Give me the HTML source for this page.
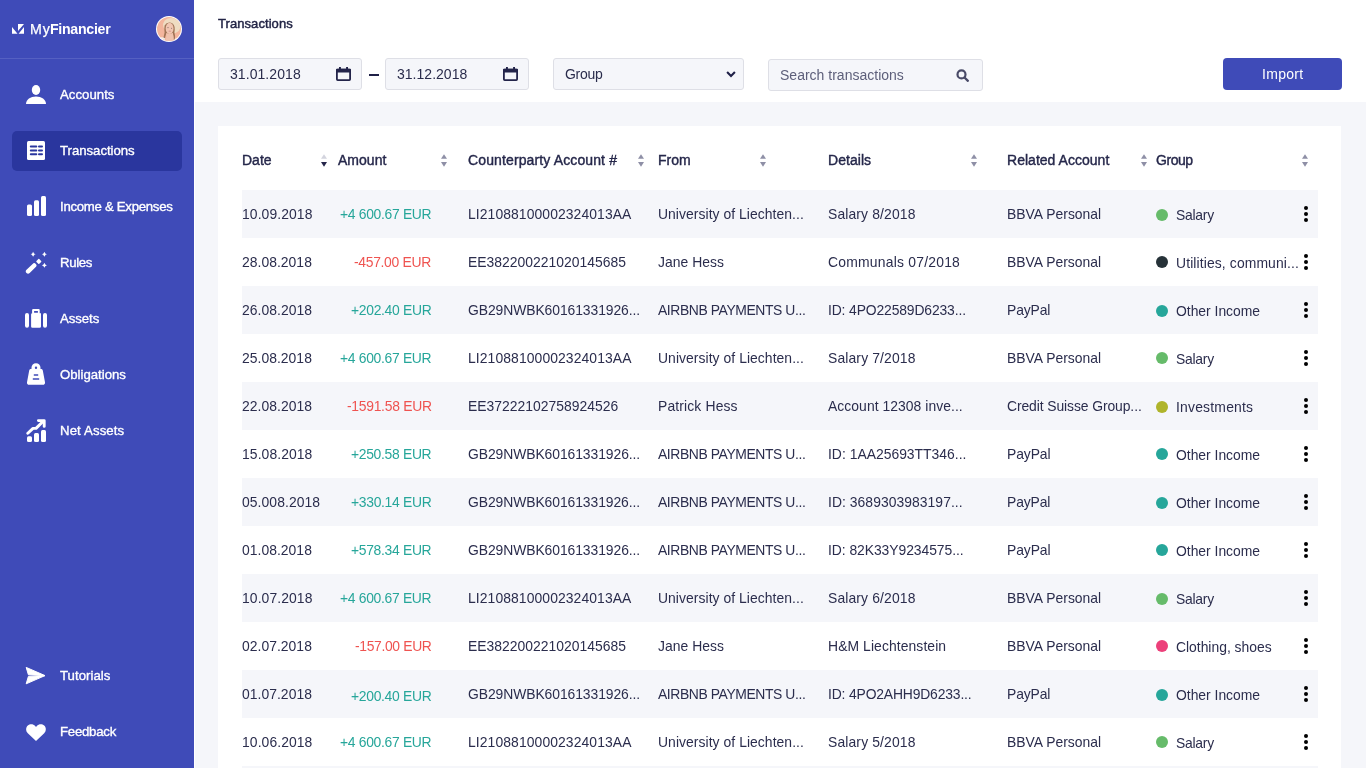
<!DOCTYPE html>
<html><head><meta charset="utf-8"><title>Transactions</title>
<style>
*{box-sizing:border-box}
html,body{margin:0;padding:0}
body{width:1366px;height:768px;overflow:hidden;position:relative;background:#fff;font-family:"Liberation Sans",sans-serif;color:#272a4a}
.t,.th,.td,.nav,.title,.iv,.btnt,.brandt{position:absolute;white-space:nowrap;line-height:20px;will-change:transform}
.sb{position:absolute;left:0;top:0;width:194px;height:768px;background:#3f4bb8}
.sbline{position:absolute;left:0;top:58px;width:194px;height:1px;background:#5560c2}
.nav{color:#fff;-webkit-text-stroke:0.35px #fff}
.active{position:absolute;left:12px;top:131px;width:170px;height:40px;border-radius:5px;background:#2a369e}
.ico{position:absolute}
.brandt{color:#fff}.my{-webkit-text-stroke:0.25px #fff}.fin{font-weight:700}
.title{color:#232546;-webkit-text-stroke:0.45px #232546}
.iv{color:#2a2c4c}.ph{color:#5d5f7a}.btnt{color:#fff}
.inp{position:absolute;top:58px;height:32px;background:#f5f6fa;border:1px solid #dedfe6;border-radius:3px}
.btn{position:absolute;left:1223px;top:58px;width:119px;height:32px;border-radius:4px;background:#3f4bb8;color:#fff;font-size:14.4px;line-height:20px;text-align:center;padding-top:6px}
.bggray{position:absolute;left:195px;top:102px;width:1171px;height:666px;background:#f5f6fa}
.card{position:absolute;left:218px;top:126px;width:1123px;height:642px;background:#fff}
.th{color:#25274a;-webkit-text-stroke:0.4px #25274a}
.sort{position:absolute;top:154px}
.rowbg{position:absolute;left:242px;width:1076px;height:48px;background:#f5f6fa}
.td{color:#2b2d4d}
.amt{text-align:right}
.pos{color:#26a69a}
.neg{color:#ef5350}
.dot{position:absolute;left:1156px;width:12px;height:12px;border-radius:50%}
.kebab{position:absolute;left:1304px;width:4px;height:16px}
.kebab i{display:block;width:4px;height:4px;border-radius:50%;background:#000;margin-bottom:2px}
</style></head><body>

<div class="sb"></div>
<div class="sbline"></div>
<div class="active"></div>
<svg class="ico" style="left:12px;top:24px" width="12" height="10" viewBox="0 0 12 10"><path d="M0 3.1V9.8H5.5Z M6 0H12L6 7Z M12 3.1V9.8H6.6Z" fill="#fff"/></svg>
<svg class="ico" style="left:156px;top:16px" width="26" height="26" viewBox="0 0 26 26">
<defs><clipPath id="av"><circle cx="13" cy="13" r="12"/></clipPath></defs>
<circle cx="13" cy="13" r="13" fill="#fff"/>
<g clip-path="url(#av)">
<rect width="26" height="26" fill="#f3b59d"/>
<ellipse cx="15.8" cy="9.6" rx="8.8" ry="7.6" transform="rotate(15 15.8 9.6)" fill="#efdcc2"/>
<path d="M8.6 9.6Q10.4 6.4 13.8 6.6Q17.6 7 18.6 11Q19 14.6 18.4 16.6Q19.6 19.6 18.8 24.2L17.4 24.2Q17.6 20.2 16.8 17.4L10.2 17.4Q9.2 20.4 8.8 24L7.2 23.6Q7.8 19.6 8.6 16.6Q8 13 8.6 9.6Z" fill="#a17456"/>
<ellipse cx="13.6" cy="12.4" rx="3.9" ry="5.6" fill="#f1c6b2"/>
<path d="M10.4 16.8Q13.6 19.4 16.8 16.8L17.4 20L18 26H9.6L10.4 20Z" fill="#efc2ae"/>
<path d="M3.6 21.6Q6.4 20.6 9 22.2L8.6 26H3Z" fill="#f2ebe6"/>
<path d="M18.4 23Q20.8 21.6 23.4 22.6L23 26H18.2Z" fill="#f2ebe6"/>
<circle cx="12" cy="11.6" r="0.55" fill="#8a6a66"/><circle cx="15.6" cy="12.2" r="0.55" fill="#8a6a66"/>
<ellipse cx="13.8" cy="15.2" rx="1.3" ry="0.6" fill="#dc9a95"/>
</g></svg>
<!-- accounts -->
<svg class="ico" style="left:26px;top:85px" width="20" height="19" viewBox="0 0 20 19"><ellipse cx="10" cy="5" rx="4.2" ry="5" fill="#fff"/><path d="M0 19C0 14.5 4.5 11.4 10 11.4C15.5 11.4 20 14.5 20 19Z" fill="#fff"/></svg>
<!-- transactions -->
<svg class="ico" style="left:27px;top:141px" width="18" height="19" viewBox="0 0 18 19"><rect width="18" height="19" rx="1.5" fill="#fff"/><g stroke="#2a369e" stroke-width="2" stroke-linecap="round"><path d="M3.8 5.5H9.3M12 5.5H15M3.8 9.5H9.3M12 9.5H15M3.8 13.3H9.3M12 13.3H15"/></g></svg>
<!-- income -->
<svg class="ico" style="left:27px;top:196px" width="19" height="20" viewBox="0 0 19 20"><rect x="0" y="8.5" width="5" height="11.5" rx="1.5" fill="#fff"/><rect x="7" y="4.2" width="5" height="15.8" rx="1.5" fill="#fff"/><rect x="14" y="0" width="5" height="20" rx="1.5" fill="#fff"/></svg>
<!-- rules -->
<svg class="ico" style="left:24px;top:250px" width="24" height="24" viewBox="0 0 24 24"><path d="M4.1 21.4L10.2 15.5" stroke="#fff" stroke-width="4.5" stroke-linecap="round"/><rect x="12.8" y="9.4" width="4" height="4" rx="0.7" transform="rotate(45 14.8 11.4)" fill="#fff"/><path id="sp" d="M9.1 1.8Q9.6 3.8 11.6 4.3Q9.6 4.8 9.1 6.8Q8.6 4.8 6.6 4.3Q8.6 3.8 9.1 1.8Z" fill="#fff"/><use href="#sp" x="11.3"/><use href="#sp" x="11.3" y="11"/></svg>
<!-- assets -->
<svg class="ico" style="left:24px;top:308px" width="24" height="20" viewBox="0 0 24 20"><rect x="1" y="5" width="4" height="14.8" rx="2" fill="#fff"/><rect x="19" y="5" width="4" height="14.8" rx="2" fill="#fff"/><path d="M9.3 1.1Q9.3 1 10 1H14.7Q15.7 1 15.7 2V5.2H17Q17 5.2 17 6.5V18.5Q17 19.8 15.7 19.8H8.4Q7.1 19.8 7.1 18.5V6.5Q7.1 5.2 8.4 5.2H8.1V2Q8.1 1 9.3 1ZM10.1 3V4.8H13.9V3Z" fill="#fff" fill-rule="evenodd"/></svg>
<!-- obligations -->
<svg class="ico" style="left:26px;top:362px" width="20" height="24" viewBox="0 0 20 24"><path d="M10 1.2C12.6 1.2 14.5 3.2 14.5 5.6C14.5 6 14.4 6.5 14.3 6.8H14.6C15.8 6.8 16.5 7.6 16.8 8.6L19 20.2C19.3 21.7 18.4 22.8 16.8 22.8H3.2C1.6 22.8 0.7 21.7 1 20.2L3.2 8.6C3.5 7.6 4.2 6.8 5.4 6.8H5.7C5.6 6.5 5.5 6 5.5 5.6C5.5 3.2 7.4 1.2 10 1.2ZM10 4.6A1.2 1.2 0 1 0 10 7A1.2 1.2 0 1 0 10 4.6Z" fill="#fff" fill-rule="evenodd"/><path d="M7.8 13H12.2M6.8 17H13.2" stroke="#3f4bb8" stroke-width="1.7"/></svg>
<!-- net assets -->
<svg class="ico" style="left:26px;top:418px" width="21" height="25" viewBox="0 0 21 25"><rect x="1" y="18.3" width="5" height="5.7" rx="1.5" fill="#fff"/><rect x="8" y="15" width="5" height="9" rx="1.5" fill="#fff"/><rect x="15" y="12" width="5" height="12" rx="1.5" fill="#fff"/><path d="M1.8 15.2L7 10.4H10L17.2 3.2" stroke="#fff" stroke-width="2.9" stroke-linecap="round" stroke-linejoin="round" fill="none"/><path d="M12.4 2.6H18.2V8.4" stroke="#fff" stroke-width="2.9" stroke-linecap="round" stroke-linejoin="round" fill="none"/></svg>
<!-- tutorials -->
<svg class="ico" style="left:25px;top:666px" width="21" height="19" viewBox="0 0 21 19"><path d="M1.2 1.4L20 9.6L3.4 8.8ZM3.4 10.4L20 9.6L1.2 17.8Z" fill="#fff" stroke="#fff" stroke-width="1" stroke-linejoin="round"/></svg>
<!-- feedback -->
<svg class="ico" style="left:25px;top:723px" width="22" height="19" viewBox="0 0 22 19"><path d="M11 18L2.8 10.3C0.6 8.2 0.6 4.6 2.8 2.6C4.9 0.6 8.3 0.8 10.2 3L11 3.9L11.8 3C13.7 0.8 17.1 0.6 19.2 2.6C21.4 4.6 21.4 8.2 19.2 10.3Z" fill="#fff"/></svg>

<div class="inp" style="left:218px;width:144px">
<svg style="position:absolute;left:117px;top:8px" width="15" height="14" viewBox="0 0 15 14"><rect x="0.9" y="2.6" width="13.2" height="10.5" rx="0.8" fill="none" stroke="#23244a" stroke-width="1.8"/><rect x="0" y="1.8" width="15" height="3.8" rx="0.8" fill="#23244a"/><rect x="3" y="0" width="1.9" height="3" fill="#23244a"/><rect x="10.1" y="0" width="1.9" height="3" fill="#23244a"/></svg></div>
<div style="position:absolute;left:369px;top:74px;width:10px;height:2px;background:#1f2047"></div>
<div class="inp" style="left:385px;width:144px">
<svg style="position:absolute;left:117px;top:8px" width="15" height="14" viewBox="0 0 15 14"><rect x="0.9" y="2.6" width="13.2" height="10.5" rx="0.8" fill="none" stroke="#23244a" stroke-width="1.8"/><rect x="0" y="1.8" width="15" height="3.8" rx="0.8" fill="#23244a"/><rect x="3" y="0" width="1.9" height="3" fill="#23244a"/><rect x="10.1" y="0" width="1.9" height="3" fill="#23244a"/></svg></div>
<div class="inp" style="left:553px;width:191px">
<svg style="position:absolute;left:172.4px;top:12.4px" width="10" height="7" viewBox="0 0 10 7"><path d="M1.1 1.1L5 5L8.9 1.1" stroke="#1f2047" stroke-width="2.1" fill="none"/></svg></div>
<div class="inp" style="left:768px;top:59px;width:215px">
<svg style="position:absolute;left:186px;top:9px" width="16" height="16" viewBox="0 0 16 16"><circle cx="6.5" cy="5.4" r="4.0" stroke="#4a4b68" stroke-width="2.2" fill="none"/><path d="M9.5 8.5L12.9 11.8" stroke="#4a4b68" stroke-width="2.3" stroke-linecap="round"/></svg></div>
<div class="btn"></div>

<div class="bggray"></div><div class="card"></div>
<svg class="sort" style="left:321px" width="6" height="13" viewBox="0 0 6 13"><path d="M3 0.2L6 4.8H0Z" fill="#d3d4de"/><path d="M3 12.8L6 8H0Z" fill="#25264a"/></svg>
<svg class="sort" style="left:441px" width="6" height="13" viewBox="0 0 6 13"><path d="M3 0.2L6 4.8H0Z" fill="#8e8fa6"/><path d="M3 12.8L6 8H0Z" fill="#8e8fa6"/></svg>
<svg class="sort" style="left:638px" width="6" height="13" viewBox="0 0 6 13"><path d="M3 0.2L6 4.8H0Z" fill="#8e8fa6"/><path d="M3 12.8L6 8H0Z" fill="#8e8fa6"/></svg>
<svg class="sort" style="left:760px" width="6" height="13" viewBox="0 0 6 13"><path d="M3 0.2L6 4.8H0Z" fill="#8e8fa6"/><path d="M3 12.8L6 8H0Z" fill="#8e8fa6"/></svg>
<svg class="sort" style="left:971px" width="6" height="13" viewBox="0 0 6 13"><path d="M3 0.2L6 4.8H0Z" fill="#8e8fa6"/><path d="M3 12.8L6 8H0Z" fill="#8e8fa6"/></svg>
<svg class="sort" style="left:1141px" width="6" height="13" viewBox="0 0 6 13"><path d="M3 0.2L6 4.8H0Z" fill="#8e8fa6"/><path d="M3 12.8L6 8H0Z" fill="#8e8fa6"/></svg>
<svg class="sort" style="left:1302px" width="6" height="13" viewBox="0 0 6 13"><path d="M3 0.2L6 4.8H0Z" fill="#8e8fa6"/><path d="M3 12.8L6 8H0Z" fill="#8e8fa6"/></svg>
<div class="rowbg" style="top:190px"></div>
<div class="dot" style="top:209px;background:#66bb6a"></div>
<div class="kebab" style="top:206px"><i></i><i></i><i></i></div>
<div class="dot" style="top:256px;background:#263238"></div>
<div class="kebab" style="top:254px"><i></i><i></i><i></i></div>
<div class="rowbg" style="top:286px"></div>
<div class="dot" style="top:305px;background:#26a69a"></div>
<div class="kebab" style="top:302px"><i></i><i></i><i></i></div>
<div class="dot" style="top:352px;background:#66bb6a"></div>
<div class="kebab" style="top:350px"><i></i><i></i><i></i></div>
<div class="rowbg" style="top:382px"></div>
<div class="dot" style="top:401px;background:#afb42b"></div>
<div class="kebab" style="top:398px"><i></i><i></i><i></i></div>
<div class="dot" style="top:448px;background:#26a69a"></div>
<div class="kebab" style="top:446px"><i></i><i></i><i></i></div>
<div class="rowbg" style="top:478px"></div>
<div class="dot" style="top:497px;background:#26a69a"></div>
<div class="kebab" style="top:494px"><i></i><i></i><i></i></div>
<div class="dot" style="top:544px;background:#26a69a"></div>
<div class="kebab" style="top:542px"><i></i><i></i><i></i></div>
<div class="rowbg" style="top:574px"></div>
<div class="dot" style="top:593px;background:#66bb6a"></div>
<div class="kebab" style="top:590px"><i></i><i></i><i></i></div>
<div class="dot" style="top:640px;background:#ec407a"></div>
<div class="kebab" style="top:638px"><i></i><i></i><i></i></div>
<div class="rowbg" style="top:670px"></div>
<div class="dot" style="top:689px;background:#26a69a"></div>
<div class="kebab" style="top:686px"><i></i><i></i><i></i></div>
<div class="dot" style="top:736px;background:#66bb6a"></div>
<div class="kebab" style="top:734px"><i></i><i></i><i></i></div>
<div class="rowbg" style="top:766px"></div>
<div id="x0" class="td" style="left:242.00px;top:204px;font-size:13.9px;letter-spacing:0.093px">10.09.2018</div>
<div id="x1" class="td pos" style="left:339.64px;top:204px;font-size:13.9px;letter-spacing:-0.313px">+4 600.67 EUR</div>
<div id="x2" class="td" style="left:468.00px;top:204px;font-size:13.9px;letter-spacing:0.094px">LI21088100002324013AA</div>
<div id="x3" class="td" style="left:658.00px;top:204px;font-size:13.9px;letter-spacing:0.058px">University of Liechten...</div>
<div id="x4" class="td" style="left:828.00px;top:204px;font-size:13.9px;letter-spacing:0.138px">Salary 8/2018</div>
<div id="x5" class="td" style="left:1007.00px;top:204px;font-size:13.9px;letter-spacing:0.018px">BBVA Personal</div>
<div id="x6" class="td" style="left:1176.00px;top:205px;font-size:13.9px;letter-spacing:-0.257px">Salary</div>
<div id="x7" class="td" style="left:242.00px;top:252px;font-size:13.9px;letter-spacing:0.037px">28.08.2018</div>
<div id="x8" class="td neg" style="left:354.28px;top:252px;font-size:13.9px;letter-spacing:-0.311px">-457.00 EUR</div>
<div id="x9" class="td" style="left:468.00px;top:252px;font-size:13.9px;letter-spacing:0.014px">EE382200221020145685</div>
<div id="x10" class="td" style="left:658.00px;top:252px;font-size:13.9px;letter-spacing:0.039px">Jane Hess</div>
<div id="x11" class="td" style="left:828.00px;top:252px;font-size:13.9px;letter-spacing:0.227px">Communals 07/2018</div>
<div id="x12" class="td" style="left:1007.00px;top:252px;font-size:13.9px;letter-spacing:0.016px">BBVA Personal</div>
<div id="x13" class="td" style="left:1176.00px;top:253px;font-size:13.9px;letter-spacing:0.121px">Utilities, communi...</div>
<div id="x14" class="td" style="left:242.00px;top:300px;font-size:13.9px;letter-spacing:0.048px">26.08.2018</div>
<div id="x15" class="td pos" style="left:350.68px;top:300px;font-size:13.9px;letter-spacing:-0.307px">+202.40 EUR</div>
<div id="x16" class="td" style="left:468.00px;top:300px;font-size:13.9px;letter-spacing:-0.074px">GB29NWBK60161331926...</div>
<div id="x17" class="td" style="left:658.00px;top:300px;font-size:13.9px;letter-spacing:-0.401px">AIRBNB PAYMENTS U...</div>
<div id="x18" class="td" style="left:828.00px;top:300px;font-size:13.9px;letter-spacing:-0.133px">ID: 4PO22589D6233...</div>
<div id="x19" class="td" style="left:1007.00px;top:300px;font-size:13.9px;letter-spacing:-0.122px">PayPal</div>
<div id="x20" class="td" style="left:1176.00px;top:301px;font-size:13.9px;letter-spacing:-0.011px">Other Income</div>
<div id="x21" class="td" style="left:242.00px;top:348px;font-size:13.9px;letter-spacing:0.037px">25.08.2018</div>
<div id="x22" class="td pos" style="left:339.61px;top:348px;font-size:13.9px;letter-spacing:-0.312px">+4 600.67 EUR</div>
<div id="x23" class="td" style="left:468.00px;top:348px;font-size:13.9px;letter-spacing:0.100px">LI21088100002324013AA</div>
<div id="x24" class="td" style="left:658.00px;top:348px;font-size:13.9px;letter-spacing:0.061px">University of Liechten...</div>
<div id="x25" class="td" style="left:828.00px;top:348px;font-size:13.9px;letter-spacing:0.140px">Salary 7/2018</div>
<div id="x26" class="td" style="left:1007.00px;top:348px;font-size:13.9px;letter-spacing:0.016px">BBVA Personal</div>
<div id="x27" class="td" style="left:1176.00px;top:349px;font-size:13.9px;letter-spacing:-0.252px">Salary</div>
<div id="x28" class="td" style="left:242.00px;top:396px;font-size:13.9px;letter-spacing:0.048px">22.08.2018</div>
<div id="x29" class="td neg" style="left:346.58px;top:396px;font-size:13.9px;letter-spacing:-0.282px">-1591.58 EUR</div>
<div id="x30" class="td" style="left:468.00px;top:396px;font-size:13.9px;letter-spacing:0.016px">EE37222102758924526</div>
<div id="x31" class="td" style="left:658.00px;top:396px;font-size:13.9px;letter-spacing:0.143px">Patrick Hess</div>
<div id="x32" class="td" style="left:828.00px;top:396px;font-size:13.9px;letter-spacing:0.056px">Account 12308 inve...</div>
<div id="x33" class="td" style="left:1007.00px;top:396px;font-size:13.9px;letter-spacing:-0.090px">Credit Suisse Group...</div>
<div id="x34" class="td" style="left:1176.00px;top:397px;font-size:13.9px;letter-spacing:0.217px">Investments</div>
<div id="x35" class="td" style="left:242.00px;top:444px;font-size:13.9px;letter-spacing:0.092px">15.08.2018</div>
<div id="x36" class="td pos" style="left:350.65px;top:444px;font-size:13.9px;letter-spacing:-0.313px">+250.58 EUR</div>
<div id="x37" class="td" style="left:468.00px;top:444px;font-size:13.9px;letter-spacing:-0.073px">GB29NWBK60161331926...</div>
<div id="x38" class="td" style="left:658.00px;top:444px;font-size:13.9px;letter-spacing:-0.402px">AIRBNB PAYMENTS U...</div>
<div id="x39" class="td" style="left:828.00px;top:444px;font-size:13.9px;letter-spacing:0.009px">ID: 1AA25693TT346...</div>
<div id="x40" class="td" style="left:1007.00px;top:444px;font-size:13.9px;letter-spacing:-0.103px">PayPal</div>
<div id="x41" class="td" style="left:1176.00px;top:445px;font-size:13.9px;letter-spacing:-0.009px">Other Income</div>
<div id="x42" class="td" style="left:242.00px;top:492px;font-size:13.9px;letter-spacing:0.076px">05.008.2018</div>
<div id="x43" class="td pos" style="left:350.68px;top:492px;font-size:13.9px;letter-spacing:-0.307px">+330.14 EUR</div>
<div id="x44" class="td" style="left:468.00px;top:492px;font-size:13.9px;letter-spacing:-0.074px">GB29NWBK60161331926...</div>
<div id="x45" class="td" style="left:658.00px;top:492px;font-size:13.9px;letter-spacing:-0.401px">AIRBNB PAYMENTS U...</div>
<div id="x46" class="td" style="left:828.00px;top:492px;font-size:13.9px;letter-spacing:0.052px">ID: 3689303983197...</div>
<div id="x47" class="td" style="left:1007.00px;top:492px;font-size:13.9px;letter-spacing:-0.122px">PayPal</div>
<div id="x48" class="td" style="left:1176.00px;top:493px;font-size:13.9px;letter-spacing:-0.011px">Other Income</div>
<div id="x49" class="td" style="left:242.00px;top:540px;font-size:13.9px;letter-spacing:0.037px">01.08.2018</div>
<div id="x50" class="td pos" style="left:350.65px;top:540px;font-size:13.9px;letter-spacing:-0.313px">+578.34 EUR</div>
<div id="x51" class="td" style="left:468.00px;top:540px;font-size:13.9px;letter-spacing:-0.073px">GB29NWBK60161331926...</div>
<div id="x52" class="td" style="left:658.00px;top:540px;font-size:13.9px;letter-spacing:-0.402px">AIRBNB PAYMENTS U...</div>
<div id="x53" class="td" style="left:828.00px;top:540px;font-size:13.9px;letter-spacing:-0.054px">ID: 82K33Y9234575...</div>
<div id="x54" class="td" style="left:1007.00px;top:540px;font-size:13.9px;letter-spacing:-0.103px">PayPal</div>
<div id="x55" class="td" style="left:1176.00px;top:541px;font-size:13.9px;letter-spacing:-0.009px">Other Income</div>
<div id="x56" class="td" style="left:242.00px;top:588px;font-size:13.9px;letter-spacing:0.093px">10.07.2018</div>
<div id="x57" class="td pos" style="left:339.64px;top:588px;font-size:13.9px;letter-spacing:-0.313px">+4 600.67 EUR</div>
<div id="x58" class="td" style="left:468.00px;top:588px;font-size:13.9px;letter-spacing:0.094px">LI21088100002324013AA</div>
<div id="x59" class="td" style="left:658.00px;top:588px;font-size:13.9px;letter-spacing:0.058px">University of Liechten...</div>
<div id="x60" class="td" style="left:828.00px;top:588px;font-size:13.9px;letter-spacing:0.138px">Salary 6/2018</div>
<div id="x61" class="td" style="left:1007.00px;top:588px;font-size:13.9px;letter-spacing:0.018px">BBVA Personal</div>
<div id="x62" class="td" style="left:1176.00px;top:589px;font-size:13.9px;letter-spacing:-0.257px">Salary</div>
<div id="x63" class="td" style="left:242.00px;top:636px;font-size:13.9px;letter-spacing:0.037px">02.07.2018</div>
<div id="x64" class="td neg" style="left:354.52px;top:636px;font-size:13.9px;letter-spacing:-0.342px">-157.00 EUR</div>
<div id="x65" class="td" style="left:468.00px;top:636px;font-size:13.9px;letter-spacing:0.014px">EE382200221020145685</div>
<div id="x66" class="td" style="left:658.00px;top:636px;font-size:13.9px;letter-spacing:0.039px">Jane Hess</div>
<div id="x67" class="td" style="left:828.00px;top:636px;font-size:13.9px;letter-spacing:0.094px">H&amp;M Liechtenstein</div>
<div id="x68" class="td" style="left:1007.00px;top:636px;font-size:13.9px;letter-spacing:0.016px">BBVA Personal</div>
<div id="x69" class="td" style="left:1176.00px;top:637px;font-size:13.9px;letter-spacing:-0.011px">Clothing, shoes</div>
<div id="x70" class="td" style="left:242.00px;top:684px;font-size:13.9px;letter-spacing:0.042px">01.07.2018</div>
<div id="x71" class="td pos" style="left:350.68px;top:686px;font-size:13.9px;letter-spacing:-0.307px">+200.40 EUR</div>
<div id="x72" class="td" style="left:468.00px;top:684px;font-size:13.9px;letter-spacing:-0.074px">GB29NWBK60161331926...</div>
<div id="x73" class="td" style="left:658.00px;top:684px;font-size:13.9px;letter-spacing:-0.401px">AIRBNB PAYMENTS U...</div>
<div id="x74" class="td" style="left:828.00px;top:684px;font-size:13.9px;letter-spacing:-0.161px">ID: 4PO2AHH9D6233...</div>
<div id="x75" class="td" style="left:1007.00px;top:684px;font-size:13.9px;letter-spacing:-0.122px">PayPal</div>
<div id="x76" class="td" style="left:1176.00px;top:685px;font-size:13.9px;letter-spacing:-0.011px">Other Income</div>
<div id="x77" class="td" style="left:242.00px;top:732px;font-size:13.9px;letter-spacing:0.092px">10.06.2018</div>
<div id="x78" class="td pos" style="left:339.61px;top:732px;font-size:13.9px;letter-spacing:-0.312px">+4 600.67 EUR</div>
<div id="x79" class="td" style="left:468.00px;top:732px;font-size:13.9px;letter-spacing:0.100px">LI21088100002324013AA</div>
<div id="x80" class="td" style="left:658.00px;top:732px;font-size:13.9px;letter-spacing:0.061px">University of Liechten...</div>
<div id="x81" class="td" style="left:828.00px;top:732px;font-size:13.9px;letter-spacing:0.140px">Salary 5/2018</div>
<div id="x82" class="td" style="left:1007.00px;top:732px;font-size:13.9px;letter-spacing:0.016px">BBVA Personal</div>
<div id="x83" class="td" style="left:1176.00px;top:733px;font-size:13.9px;letter-spacing:-0.252px">Salary</div>
<div id="x84" class="th" style="left:242.00px;top:150px;font-size:14px;letter-spacing:0.000px">Date</div>
<div id="x85" class="th" style="left:338.00px;top:150px;font-size:14px;letter-spacing:0.020px">Amount</div>
<div id="x86" class="th" style="left:468.00px;top:150px;font-size:14px;letter-spacing:0.125px">Counterparty Account #</div>
<div id="x87" class="th" style="left:658.00px;top:150px;font-size:14px;letter-spacing:0.023px">From</div>
<div id="x88" class="th" style="left:828.00px;top:150px;font-size:14px;letter-spacing:0.047px">Details</div>
<div id="x89" class="th" style="left:1007.00px;top:150px;font-size:14px;letter-spacing:0.025px">Related Account</div>
<div id="x90" class="th" style="left:1156.00px;top:150px;font-size:14px;letter-spacing:-0.441px">Group</div>
<div id="x91" class="nav" style="left:60.00px;top:85px;font-size:13.2px;letter-spacing:0.032px">Accounts</div>
<div id="x92" class="nav" style="left:60.00px;top:141px;font-size:13.2px;letter-spacing:-0.027px">Transactions</div>
<div id="x93" class="nav" style="left:60.00px;top:197px;font-size:13.2px;letter-spacing:-0.282px">Income &amp; Expenses</div>
<div id="x94" class="nav" style="left:60.00px;top:253px;font-size:13.2px;letter-spacing:-0.316px">Rules</div>
<div id="x95" class="nav" style="left:60.00px;top:309px;font-size:13.2px;letter-spacing:-0.059px">Assets</div>
<div id="x96" class="nav" style="left:60.00px;top:365px;font-size:13.2px;letter-spacing:-0.002px">Obligations</div>
<div id="x97" class="nav" style="left:60.00px;top:421px;font-size:13.2px;letter-spacing:0.130px">Net Assets</div>
<div id="x98" class="nav" style="left:60.00px;top:666px;font-size:13.2px;letter-spacing:0.044px">Tutorials</div>
<div id="x99" class="nav" style="left:60.00px;top:722px;font-size:13.2px;letter-spacing:-0.234px">Feedback</div>
<div id="x100" class="title" style="left:218.00px;top:14px;font-size:13px;letter-spacing:0.068px">Transactions</div>
<div id="x101" class="brandt my" style="left:29.60px;top:19px;font-size:14.2px;letter-spacing:0.900px">My</div>
<div id="x102" class="brandt fin" style="left:50.40px;top:19px;font-size:14.2px;letter-spacing:-0.300px">Financier</div>
<div id="x103" class="iv" style="left:230.00px;top:64px;font-size:14px;letter-spacing:0.066px">31.01.2018</div>
<div id="x104" class="iv" style="left:397.00px;top:64px;font-size:14px;letter-spacing:0.019px">31.12.2018</div>
<div id="x105" class="iv" style="left:565.00px;top:64px;font-size:14px;letter-spacing:-0.310px">Group</div>
<div id="x106" class="iv ph" style="left:780.00px;top:65px;font-size:14px;letter-spacing:0.008px">Search transactions</div>
<div id="x107" class="btnt" style="left:1261.83px;top:64px;font-size:14px;letter-spacing:0.289px">Import</div>
</body></html>
